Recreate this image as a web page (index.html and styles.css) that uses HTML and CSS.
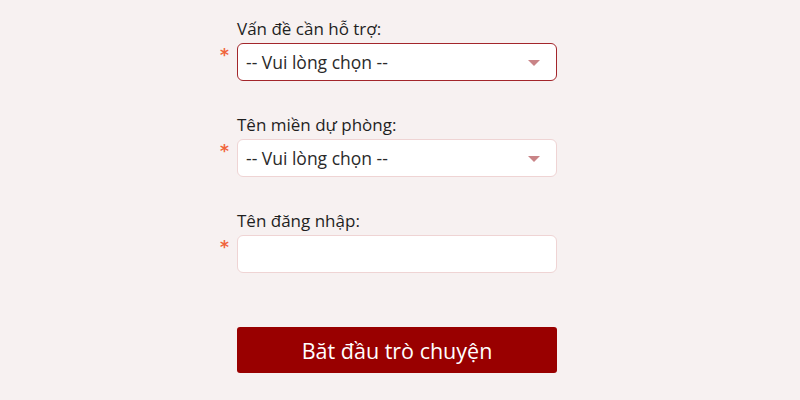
FILE: index.html
```html
<!DOCTYPE html>
<html lang="vi">
<head>
<meta charset="utf-8">
<title>Hỗ trợ</title>
<link rel="stylesheet" href="styles.css">
</head>
<body>
<form class="form">
  <div class="group">
    <label class="label">Vấn đề cần hỗ trợ:</label>
    <div class="row">
      <span class="req">*</span>
      <div class="box box-focus">
        <span class="value">-- Vui lòng chọn --</span>
        <span class="caret"></span>
      </div>
    </div>
  </div>
  <div class="group">
    <label class="label">Tên miền dự phòng:</label>
    <div class="row">
      <span class="req">*</span>
      <div class="box">
        <span class="value">-- Vui lòng chọn --</span>
        <span class="caret"></span>
      </div>
    </div>
  </div>
  <div class="group">
    <label class="label">Tên đăng nhập:</label>
    <div class="row">
      <span class="req">*</span>
      <div class="box"></div>
    </div>
  </div>
  <button type="button" class="submit">Băt đầu trò chuyện</button>
</form>
</body>
</html>
```

FILE: styles.css
```css
html, body {
  margin: 0;
  padding: 0;
  background: #f7f1f1;
  font-family: "Open Sans", "Noto Sans", "DejaVu Sans", sans-serif;
  color: #222;
}
.form {
  width: 320px;
  margin-left: 237px;
  padding-top: 19px;
  display: flex;
  flex-direction: column;
}
.group {
  display: flex;
  flex-direction: column;
  margin-bottom: 34px;
}
.label {
  font-size: 17px;
  line-height: 20px;
  height: 20px;
  margin-bottom: 4px;
  color: #1f1f1f;
}
.row {
  display: flex;
  align-items: flex-start;
  margin-left: -17px;
}
.req {
  width: 17px;
  flex: 0 0 17px;
  color: #f0643c;
  font-size: 17px;
  font-weight: bold;
  line-height: 20px;
  padding-top: 2px;
  font-family: "DejaVu Sans", sans-serif;
}
.box {
  flex: 1;
  box-sizing: border-box;
  height: 38px;
  background: #fff;
  border: 1px solid #efd4d4;
  border-radius: 6px;
  display: flex;
  align-items: center;
  justify-content: space-between;
  padding: 0 16px 0 8px;
}
.box-focus {
  border-color: #a3262b;
}
.value {
  font-size: 17.5px;
  color: #2a2a2a;
}
.caret {
  width: 0;
  height: 0;
  border-left: 6px solid transparent;
  border-right: 6px solid transparent;
  border-top: 6px solid #c98487;
  margin-top: 1px;
}
.submit {
  margin-top: 20px;
  height: 46px;
  background: #990000;
  border: none;
  border-radius: 3px;
  color: #fff;
  font-family: "Open Sans", "Noto Sans", sans-serif;
  font-size: 21.5px;
  padding: 0;
  cursor: pointer;
}
```
